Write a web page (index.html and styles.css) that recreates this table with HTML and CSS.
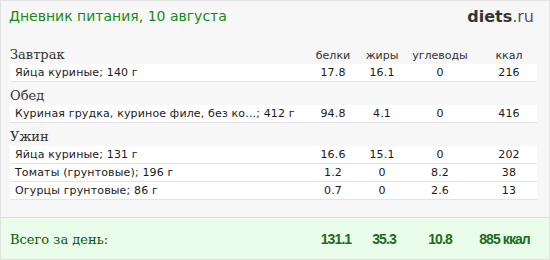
FILE: index.html
```html
<!DOCTYPE html>
<html lang="ru">
<head>
<meta charset="utf-8">
<title>Дневник питания</title>
<link rel="stylesheet" href="styles.css">
</head>
<body>
<div class="card">
  <header class="top">
    <h1 class="title">Дневник питания, 10 августа</h1>
    <div class="logo"><b>diets</b>.ru</div>
  </header>
  <div class="table">
    <section class="meal">
      <div class="row head"><span class="meal-name">Завтрак</span><span class="c">белки</span><span class="c">жиры</span><span class="c">углеводы</span><span class="c k">ккал</span></div>
      <div class="row item"><span class="name">Яйца куриные; 140 г</span><span class="c">17.8</span><span class="c">16.1</span><span class="c">0</span><span class="c k">216</span></div>
    </section>
    <section class="meal">
      <div class="row head"><span class="meal-name">Обед</span></div>
      <div class="row item"><span class="name">Куриная грудка, куриное филе, без ко...; 412 г</span><span class="c">94.8</span><span class="c">4.1</span><span class="c">0</span><span class="c k">416</span></div>
    </section>
    <section class="meal">
      <div class="row head"><span class="meal-name">Ужин</span></div>
      <div class="row item"><span class="name">Яйца куриные; 131 г</span><span class="c">16.6</span><span class="c">15.1</span><span class="c">0</span><span class="c k">202</span></div>
      <div class="row item"><span class="name">Томаты (грунтовые); 196 г</span><span class="c">1.2</span><span class="c">0</span><span class="c">8.2</span><span class="c k">38</span></div>
      <div class="row item"><span class="name">Огурцы грунтовые; 86 г</span><span class="c">0.7</span><span class="c">0</span><span class="c">2.6</span><span class="c k">13</span></div>
    </section>
  </div>
  <footer class="row total">
    <span class="total-label">Всего за день:</span><span class="c t1">131.1</span><span class="c t2">35.3</span><span class="c">10.8</span><span class="c tk">885 ккал</span>
  </footer>
</div>
</body>
</html>
```
FILE: styles.css
```css
* { box-sizing: border-box; }
html, body { margin: 0; padding: 0; background: #f7f7f7; }

.card {
  width: 550px;
  height: 260px;
  border: 1px solid #e2e2e2;
  background: #f7f7f7;
  display: flex;
  flex-direction: column;
  font-family: "DejaVu Sans", Verdana, sans-serif;
  color: #222;
}

.top {
  display: flex;
  justify-content: space-between;
  align-items: flex-start;
  padding: 6px 15px 0 8px;
  height: 45px;
}

.title {
  margin: 0;
  font-weight: normal;
  font-size: 14px;
  line-height: 18px;
  color: #168a16;
}

.logo {
  margin-top: 1px;
  font-size: 16px;
  line-height: 18px;
  color: #555;
}
.logo b { color: #333; font-weight: bold; }

.table { padding: 0 12px 0 9px; }

.meal + .meal { margin-top: 5px; }

.row {
  display: grid;
  grid-template-columns: 1fr 46px 52px 64px 65px;
  align-items: baseline;
}

.c { text-align: center; white-space: nowrap; }
.k { padding-left: 9px; }

.head {
  height: 18px;
  line-height: 18px;
  font-size: 11px;
  color: #333;
}

.meal-name {
  font-family: "DejaVu Serif", Georgia, serif;
  font-size: 13px;
  color: #333;
}

.item {
  height: 18px;
  line-height: 17px;
  background: #fff;
  border-bottom: 1px solid #e4e4e4;
  font-size: 11px;
  letter-spacing: 0.15px;
  color: #1a1a1a;
}
.name { padding-left: 5px; white-space: nowrap; overflow: hidden; }

.total {
  margin-top: auto;
  height: 42px;
  padding: 2px 12px 0 9px;
  border-top: 1px solid #dcdcdc;
  background: #eafcea;
  line-height: 38px;
  font-family: "Liberation Sans", Arial, sans-serif;
  font-weight: bold;
  font-size: 14px;
  letter-spacing: -0.9px;
  color: #1d6b1d;
}
.total-label {
  font-family: "DejaVu Serif", Georgia, serif;
  font-weight: normal;
  font-size: 13px;
  letter-spacing: 0;
  color: #0b5a0b;
}
.t1 { padding-left: 6px; }
.t2 { padding-left: 4px; }
.tk { padding-right: 0; }
```
